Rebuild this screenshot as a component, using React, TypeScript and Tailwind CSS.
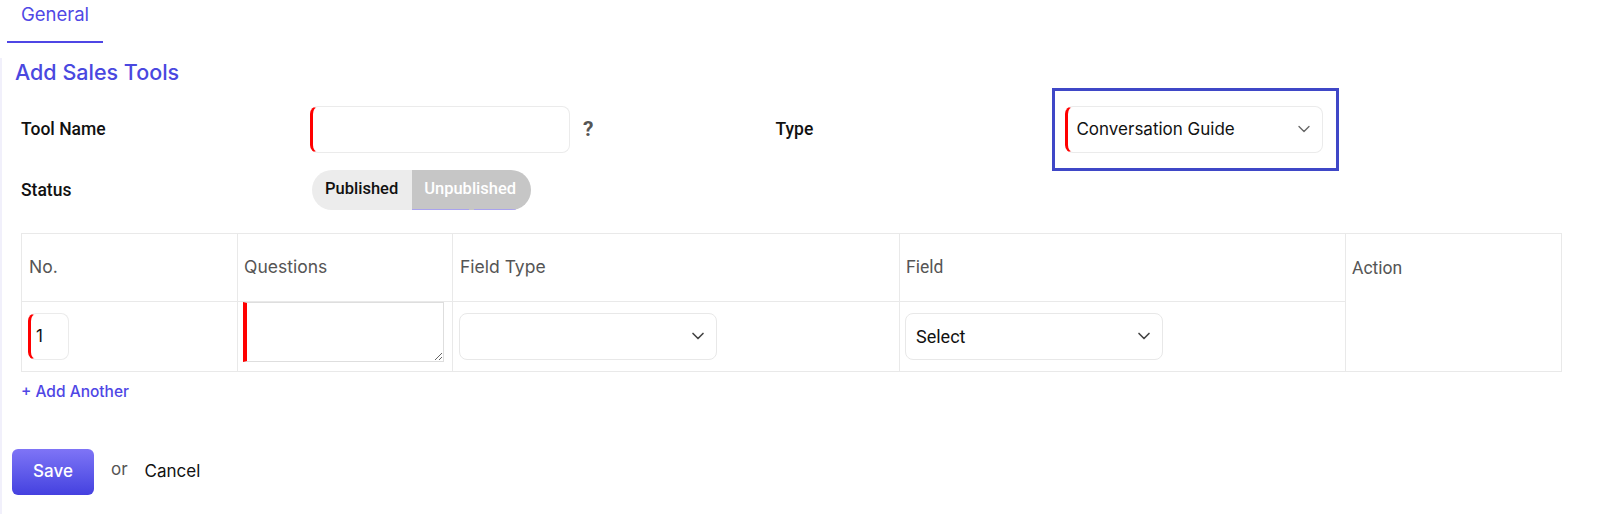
import { ChevronDown } from "lucide-react";

const inter = "font-['Inter',sans-serif]";
const roboto = "font-['Roboto',sans-serif]";

function Select({ value, className = "" }: { value?: string; className?: string }) {
  return (
    <div
      className={`flex h-[47px] items-center justify-between rounded-lg border border-[#e8e8e8] bg-white pl-[10px] pr-[8px] ${className}`}
    >
      <span className={`${roboto} text-[18px] text-[#111]`}>{value}</span>
      <ChevronDown className="h-5 w-5 text-[#444]" strokeWidth={2} />
    </div>
  );
}

export default function App() {
  return (
    <div className={`${inter} min-h-screen bg-white`}>
      {/* Tabs */}
      <div className="flex pl-[7px]">
        <div className="w-[96px] border-b-2 border-[#4f46e5] pt-[1px] pb-[12px] text-center text-[18.5px] text-[#5048e5]">
          General
        </div>
      </div>

      <div className="mt-[15px] border-l-2 border-[#f1f0fb] pb-[19px]">
        <h1 className="pl-[13px] text-[21.5px] font-medium leading-[28px] text-[#4a48e0]">
          Add Sales Tools
        </h1>

        {/* Tool Name / Type */}
        <div className="mt-[2px] flex items-center pl-[19px]">
          <div className="flex items-center">
            <div className={`${roboto} w-[289px] text-[17.5px] font-medium text-[#111]`}>Tool Name</div>
            <div className="h-[47px] w-[260px] rounded-lg border border-[#ebebeb] border-l-[3px] border-l-[#ff0000]" />
            <span className={`${roboto} ml-[13px] text-[21px] font-bold text-[#555]`}>?</span>
          </div>
          <div className={`${roboto} ml-[182px] w-[277px] text-[17.5px] font-medium text-[#111]`}>Type</div>
          <div className="border-[3px] border-[#3f47c7] py-[15px] pl-[10px] pr-[13px]">
            <div className="flex h-[47px] w-[258px] items-center justify-between rounded-lg border border-[#ebebeb] border-l-[3px] border-l-[#ff0000] pl-[8px] pr-[8px]">
              <span className="text-[17px] text-[#111]">Conversation Guide</span>
              <ChevronDown className="h-5 w-5 text-[#666]" strokeWidth={1.6} />
            </div>
          </div>
        </div>

        {/* Status */}
        <div className="mt-[-1px] flex items-center pl-[19px]">
          <div className={`${roboto} w-[291px] text-[17.5px] font-medium text-[#111]`}>Status</div>
          <div className={`${roboto} flex h-[40px] overflow-hidden rounded-full text-[16.5px] font-medium`}>
            <div className="flex items-center bg-[#ececec] pl-[13px] pr-[14px] text-[#111]">Published</div>
            <div className="relative flex items-center bg-[#c6c6c6] pl-[12px] pr-[15px] text-white">
              Unpublished
              <span className="absolute bottom-0 left-0 h-[1px] w-[57px] bg-[#a9a3ee]" />
              <span className="absolute bottom-0 left-[62px] h-[1px] w-[42px] bg-[#a9a3ee]" />
            </div>
          </div>
        </div>

        {/* Table */}
        <div className="mt-[23px] pl-[19px] pr-[49px]">
          <table className="w-full border-collapse text-[17.5px] text-[#555]">
            <tbody>
              <tr className="h-[68px]">
                <td className="w-[216px] border border-[#e9e9e9] pl-[7px]">No.</td>
                <td className="w-[215px] border border-[#e9e9e9] pl-[6px]">Questions</td>
                <td className="w-[447px] border border-[#e9e9e9] pl-[7px]">Field Type</td>
                <td className={`${roboto} w-[446px] border border-[#e9e9e9] pl-[6px]`}>Field</td>
                <td
                  rowSpan={2}
                  className={`${roboto} border border-[#e9e9e9] pl-[6px] pt-[21px] align-top`}
                >
                  Action
                </td>
              </tr>
              <tr className="h-[70px]">
                <td className="border border-[#e9e9e9] pl-[6px]">
                  <div className="flex h-[47px] w-[41px] items-center rounded-lg border border-[#ebebeb] border-l-[3px] border-l-[#ff0000] pl-[5px] text-[17px] text-[#111]">
                    1
                  </div>
                </td>
                <td className="border border-[#e9e9e9] pl-[5px] align-top">
                  <textarea
                    className="mt-0 block h-[60px] w-[201px] resize border border-[#dedede] border-l-[4px] border-l-[#ff0000] bg-white outline-none"
                    defaultValue=""
                  />
                </td>
                <td className="border border-[#e9e9e9] pl-[6px]">
                  <Select className="w-[258px]" />
                </td>
                <td className="border border-[#e9e9e9] pl-[5px]">
                  <Select value="Select" className="w-[258px]" />
                </td>
              </tr>
            </tbody>
          </table>
        </div>

        <div className="mt-[8px] pl-[19px] text-[15.5px] font-medium text-[#4f46e5]">+ Add Another</div>

        {/* Actions */}
        <div className="mt-[46px] flex items-center pl-[10px]">
          <button className="h-[46px] w-[82px] rounded-md bg-gradient-to-b from-[#7f74f6] to-[#4540df] text-[17px] font-medium text-white">
            Save
          </button>
          <span className="ml-[17px] mb-[4px] text-[17px] text-[#555]">or</span>
          <span className="ml-[17px] text-[17px] text-[#111]">Cancel</span>
        </div>
      </div>
    </div>
  );
}
